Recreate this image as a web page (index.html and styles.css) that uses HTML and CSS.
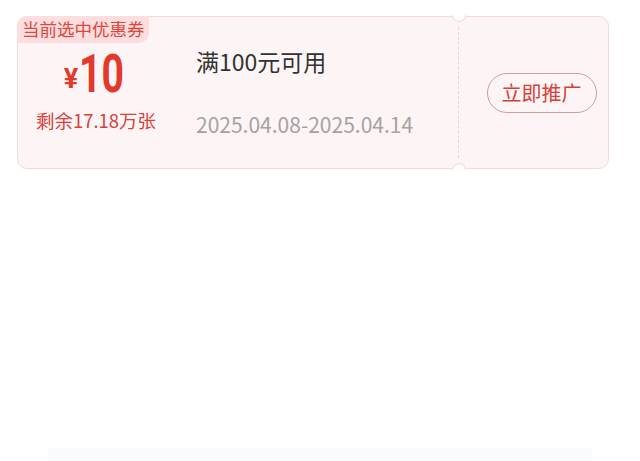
FILE: index.html
```html
<!DOCTYPE html>
<html lang="zh-CN">
  <head>
    <meta charset="UTF-8" />
    <meta name="viewport" content="width=device-width, initial-scale=1.0" />
    <title>优惠券</title>
    <link rel="stylesheet" href="styles.css">
  </head>
  <body>
    <!-- 当前选中的优惠券 -->
    <div class="coupon">
      <span class="tag">当前选中优惠券</span>
      <div class="coupon-left">
        <div class="price"><span class="yen">¥</span><span class="amount">10</span></div>
        <div class="remain">剩余17.18万张</div>
      </div>
      <div class="coupon-mid">
        <div class="cond">满100元可用</div>
        <div class="date">2025.04.08-2025.04.14</div>
      </div>
      <div class="divider"></div>
      <div class="coupon-right">
        <a href="#" class="btn">立即推广</a>
      </div>
    </div>

    <div class="bottom-bar"></div>
  </body>
</html>
```

FILE: styles.css
```css
/* Основные стили */
body {
  margin: 0;
  background: #fff;
  font-family: "Noto Sans CJK SC", "Noto Sans", sans-serif;
  height: 461px;
  overflow: hidden;
  position: relative;
}

.coupon {
  position: relative;
  display: flex;
  margin: 16px 31px 0 17px;
  height: 151px;
  background: #fdf5f5;
  border: 1px solid #f4d9d8;
  border-radius: 10px;
}

.tag {
  position: absolute;
  left: -1px;
  top: -1px;
  height: 27px;
  line-height: 26px;
  padding: 0 4px 0 5px;
  font-size: 17.5px;
  color: #e0463d;
  background: #fbdedd;
  border-radius: 10px 0 10px 0;
}

.coupon-left {
  width: 156px;
  display: flex;
  flex-direction: column;
  align-items: center;
  padding-top: 29px;
}

.price {
  display: flex;
  align-items: baseline;
  color: #e2392c;
  height: 56px;
  margin-right: 5px;
}

.yen {
  font-family: "Roboto", sans-serif;
  font-weight: bold;
  font-size: 27px;
  margin-right: 1px;
  transform: translateY(-4px);
}

.amount {
  display: inline-block;
  font-family: "Roboto", sans-serif;
  font-weight: bold;
  font-size: 53px;
  line-height: 56px;
  transform: scaleX(0.74);
  transform-origin: left;
  width: 44px;
}

.remain {
  margin-top: 5px;
  font-size: 18.5px;
  color: #d8403a;
  white-space: nowrap;
}

.coupon-mid {
  flex: 1;
  padding-left: 22px;
  padding-top: 26px;
}

.cond {
  font-size: 23px;
  color: #333;
  line-height: 36px;
}

.date {
  margin-top: 30px;
  font-size: 21px;
  color: #a3a3a3;
  white-space: nowrap;
}

.divider {
  position: relative;
  width: 0;
  border-left: 1px dashed #ecd3d2;
  margin: 10px 0;
}

.divider::before,
.divider::after {
  content: "";
  position: absolute;
  left: -7px;
  width: 12px;
  height: 6px;
  background: #fff;
  border: 1px solid #f4d9d8;
}

.divider::before {
  top: -12px;
  border-top: none;
  border-radius: 0 0 7px 7px;
}

.divider::after {
  bottom: -12px;
  border-bottom: none;
  border-radius: 7px 7px 0 0;
}

.coupon-right {
  width: 149px;
  display: flex;
  align-items: center;
  justify-content: center;
  padding-left: 16px;
  box-sizing: border-box;
}

.btn {
  display: block;
  width: 108px;
  height: 38px;
  line-height: 37px;
  text-align: center;
  text-decoration: none;
  font-size: 20px;
  color: #d6403a;
  border: 1px solid #d49b97;
  border-radius: 20px;
}

.bottom-bar {
  position: absolute;
  left: 48px;
  right: 48px;
  bottom: 0;
  height: 13px;
  background: #f9fafc;
}
```
